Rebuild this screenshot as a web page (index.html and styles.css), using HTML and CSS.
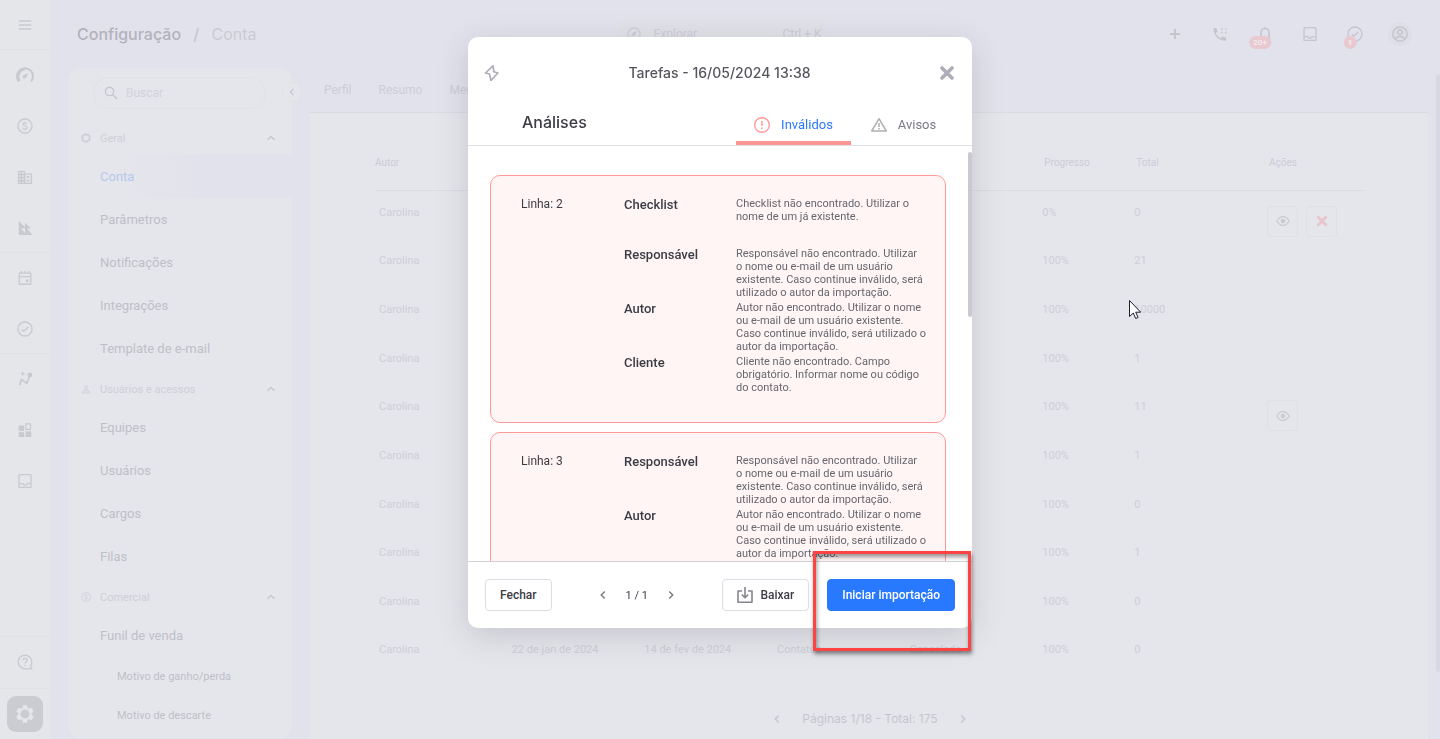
FILE: index.html
```html
<!DOCTYPE html>
<html lang="pt-BR">
<head>
  <meta charset="utf-8">
  <meta name="viewport" content="width=device-width, initial-scale=1">
  <title>Configuração / Conta</title>
  <link rel="stylesheet" href="styles.css">
</head>
<body>
  <!-- Shared icons -->
  <svg class="sprite" aria-hidden="true">
    <symbol id="i-up" viewBox="0 0 24 24"><path d="M7 14.5l5-5 5 5" fill="none" stroke="currentColor" stroke-width="2"/></symbol>
    <symbol id="i-left" viewBox="0 0 24 24"><path d="M15 6l-6 6 6 6" fill="none" stroke="currentColor" stroke-width="2.4"/></symbol>
    <symbol id="i-right" viewBox="0 0 24 24"><path d="M9 6l6 6-6 6" fill="none" stroke="currentColor" stroke-width="2.4"/></symbol>
    <symbol id="i-coin" viewBox="0 0 24 24"><circle cx="12" cy="12" r="10.5" fill="none" stroke="currentColor" stroke-width="2"/><path d="M15 9.2c-.3-1.3-1.4-2-3-2-1.7 0-3 .8-3 2.300 0 3.300 6.200 1.600 6.200 5 0 1.500-1.400 2.300-3.200 2.300s-3-.8-3.200-2.200M12 5.200v2M12 16.800v2" fill="none" stroke="currentColor" stroke-width="1.800"/></symbol>
    <symbol id="i-check" viewBox="0 0 24 24"><circle cx="12" cy="12" r="10.500" fill="none" stroke="currentColor" stroke-width="2"/><path d="M7 12.200l3.300 3.300 6.700-6.700" fill="none" stroke="currentColor" stroke-width="2"/></symbol>
    <symbol id="i-inbox" viewBox="0 0 24 24"><path d="M4 2.500h16l1 1V21.500H3V3.500zM3 16h5.500c.8 1.600 2 2.200 3.500 2.200s2.700-.6 3.500-2.200H21" fill="none" stroke="currentColor" stroke-width="2" stroke-linejoin="round"/></symbol>
    <symbol id="i-gear" viewBox="0 0 24 24"><path fill="currentColor" fill-rule="evenodd" d="M19.140 12.940c.04-.3.06-.61.06-.94 0-.32-.02-.64-.07-.94l2.030-1.580c.18-.14.23-.41.12-.61l-1.920-3.320c-.12-.22-.37-.29-.59-.22l-2.390.96c-.5-.38-1.030-.7-1.620-.94l-.36-2.540c-.04-.24-.24-.41-.48-.41h-3.840c-.24 0-.43.17-.47.41l-.36 2.540c-.59.24-1.130.57-1.620.94l-2.390-.96c-.22-.08-.47 0-.59.22L2.740 8.870c-.12.210-.08.470.12.610l2.030 1.580c-.05.3-.09.630-.09.940s.02.640.07.940l-2.030 1.580c-.18.140-.23.410-.12.610l1.920 3.320c.12.220.37.290.59.220l2.390-.960c.5.380 1.030.7 1.620.940l.36 2.540c.05.240.24.410.48.410h3.840c.24 0 .44-.17.47-.410l.36-2.540c.59-.24 1.130-.56 1.620-.940l2.390.960c.22.080.47 0 .59-.220l1.920-3.320c.12-.220.07-.470-.12-.610zM12 17a5 5 0 1 1 0-10 5 5 0 0 1 0 10z"/></symbol>
    <symbol id="i-eye" viewBox="0 0 24 24"><path d="M1.500 12C4 7 7.600 4.500 12 4.500S20 7 22.500 12C20 17 16.400 19.500 12 19.500S4 17 1.500 12z" fill="none" stroke="currentColor" stroke-width="2"/><circle cx="12" cy="12" r="3.800" fill="currentColor"/></symbol>
    <symbol id="i-close" viewBox="0 0 24 24"><path d="M4.500 4.500l15 15M19.500 4.500l-15 15" fill="none" stroke="currentColor" stroke-width="5.500" stroke-linecap="round"/></symbol>
  </svg>

  <div class="app">
    <nav class="rail" aria-label="Principal">
      <div class="rail-group">
        <button class="rail-item" aria-label="Menu"><svg class="icon-18" viewBox="0 0 18 18"><path d="M2 4.500h14M2 9h14M2 13.500h14" stroke="currentColor" stroke-width="1.600"/></svg></button>
      </div>
      <div class="rail-group">
        <a class="rail-item" href="#"><svg class="icon-20" viewBox="0 0 20 20"><path d="M4 16.500A8 8 0 1 1 16 16.500" fill="none" stroke="currentColor" stroke-width="2"/><path d="M4.500 16A7.500 7.500 0 0 1 10 4" fill="none" stroke="currentColor" stroke-width="3"/><path d="M13.500 8l-2.500 4.500a1.800 1.800 0 1 1-2-2.500z" fill="currentColor"/></svg></a>
        <a class="rail-item" href="#"><svg class="icon-16"><use href="#i-coin"/></svg></a>
        <a class="rail-item" href="#"><svg class="icon-18" viewBox="0 0 18 18"><path fill="currentColor" fill-rule="evenodd" d="M1 2h8v3h8v12H1zM2.500 3.500v2H4v-2zM6 3.500v2h1.500v-2zM2.500 7v2H4V7zM6 7v2h1.500V7zM2.500 10.500v2H4v-2zM6 10.500v2h1.500v-2zM2.500 14v1.500H4V14zM6 14v1.500h1.500V14zM9.500 6.500v9h6v-9zM11 8h3v2h-3zM11 12h3v2h-3z"/></svg></a>
        <a class="rail-item" href="#"><svg class="icon-18" viewBox="0 0 18 18"><path fill="currentColor" d="M2 1l7 7V3l7 6.500h-4.500L17.500 17H2z"/><path d="M9 9.500v5l-4.500-5z" fill="#e5e6ea"/></svg></a>
      </div>
      <div class="rail-group">
        <a class="rail-item" href="#"><svg class="icon-18" viewBox="0 0 18 18"><path d="M2.500 3.500h13v12.500h-13zM2.500 7.500h13M5 1v3M13 1v3M9 1v3" fill="none" stroke="currentColor" stroke-width="1.500" stroke-linejoin="round"/><circle cx="11.500" cy="12" r="1.700" fill="currentColor"/></svg></a>
        <a class="rail-item" href="#"><svg class="icon-16"><use href="#i-check"/></svg></a>
      </div>
      <div class="rail-group">
        <a class="rail-item" href="#"><svg class="icon-16" viewBox="0 0 18 18"><path d="M3 16l2-6.500 6 4.500 3-8" fill="none" stroke="currentColor" stroke-width="1.900" stroke-linejoin="round"/><circle cx="14.500" cy="4.500" r="2.700" fill="currentColor"/><path d="M6.500 0l.8 2.200 2.200.8-2.200.8-.8 2.200-.8-2.200L3.500 3l2.200-.8z" fill="currentColor"/></svg></a>
        <a class="rail-item" href="#"><svg class="icon-18" viewBox="0 0 18 18"><path d="M2 4h6v6H2zM2 11.500h6V17H2zM9.500 10.500H16V17H9.500z" fill="currentColor"/><path d="M10 2.200h5.200v6H10z" fill="none" stroke="currentColor" stroke-width="1.400"/></svg></a>
        <a class="rail-item" href="#"><svg class="icon-18"><use href="#i-inbox"/></svg></a>
      </div>
      <div class="rail-group rail-bottom">
        <a class="rail-item" href="#"><svg class="icon-18" viewBox="0 0 18 18"><path d="M16.700 16.700H9A7.700 7.700 0 1 1 16.700 9c0 2-.6 3.500-1.600 5z" fill="none" stroke="currentColor" stroke-width="1.500" stroke-linejoin="round"/><path d="M6.800 7c.2-1.400 1-2 2.200-2s2.300.8 2.300 2C11.300 8.700 9 8.900 9 10.700M9 12v1.500" fill="none" stroke="currentColor" stroke-width="1.500"/></svg></a>
      </div>
      <div class="rail-group">
        <a class="rail-item" href="#"><span class="rail-active"><svg class="icon-22"><use href="#i-gear"/></svg></span></a>
      </div>
    </nav>

    <div class="page">
      <header class="topbar">
        <h1 class="crumbs">Configuração <span class="slash">/</span> <span class="crumb">Conta</span></h1>
        <button class="explore">
          <svg class="icon-14" viewBox="0 0 24 24"><circle cx="12" cy="12" r="10.500" fill="none" stroke="currentColor" stroke-width="2"/><path d="M17 7l-3 7-7 3 3-7z" fill="currentColor"/></svg>
          <span>Explorar</span><span class="shortcut">Ctrl + K</span>
        </button>
        <div class="tools">
          <button class="tool" aria-label="Adicionar"><svg class="icon-14" viewBox="0 0 14 14"><path d="M7 2v10M2 7h10" stroke="currentColor" stroke-width="2"/></svg></button>
          <button class="tool" aria-label="Telefone"><svg class="icon-16" viewBox="0 0 16 16"><path d="M1.500 2h3l1 3.500-1.700 1.700c1 2.200 2.800 4 5 5l1.700-1.700 3.500 1v3.200C7 15.200 1 9 1.500 2z" fill="currentColor"/><path d="M9 3h1.500M13 3h1.500M9 6.500h1.500M13 6.500h1.500" stroke="currentColor" stroke-width="1.700"/></svg></button>
          <button class="tool" aria-label="Notificações"><svg class="icon-16" viewBox="0 0 16 16"><path d="M3 13h10.500M4 13V6.500a4 4 0 0 1 8 0V13M8 1v2" fill="none" stroke="currentColor" stroke-width="1.600"/></svg><span class="badge">20+</span></button>
          <button class="tool" aria-label="Caixa de entrada"><svg class="icon-16"><use href="#i-inbox"/></svg></button>
          <button class="tool" aria-label="Tarefas"><svg class="icon-16"><use href="#i-check"/></svg><span class="badge">1</span></button>
          <button class="tool" aria-label="Perfil"><span class="avatar"><svg class="icon-18" viewBox="0 0 18 18"><g fill="none" stroke="currentColor" stroke-width="1.700"><circle cx="9" cy="9" r="8"/><circle cx="9" cy="7" r="2.600"/><path d="M3.800 14c2.800-3 7.600-3 10.400 0"/></g></svg></span></button>
        </div>
      </header>

      <div class="columns">
        <aside class="sidebar">
          <button class="collapse" aria-label="Recolher"><svg class="icon-12"><use href="#i-left"/></svg></button>
          <label class="search">
            <svg class="icon-14" viewBox="0 0 14 14"><circle cx="5.500" cy="5.500" r="4.200" fill="none" stroke="currentColor" stroke-width="1.300"/><path d="M8.500 8.500l4.500 4.500" stroke="currentColor" stroke-width="1.600"/></svg>
            <input type="text" placeholder="Buscar" aria-label="Buscar">
          </label>
          <button class="section"><svg class="icon-10" viewBox="0 0 10 10"><path d="M5 1l3.500 2v4L5 9 1.500 7V3z" fill="none" stroke="currentColor" stroke-width="1.800"/></svg><span>Geral</span><svg class="icon-16"><use href="#i-up"/></svg></button>
          <a class="link active" href="#">Conta</a>
          <a class="link" href="#">Parâmetros</a>
          <a class="link" href="#">Notificações</a>
          <a class="link" href="#">Integrações</a>
          <a class="link" href="#">Template de e-mail</a>
          <button class="section"><svg class="icon-10" viewBox="0 0 10 10"><g fill="none" stroke="currentColor"><circle cx="5" cy="3.500" r="1.600"/><path d="M1.500 9V8c1-2 6-2 7 0v1z"/></g></svg><span>Usuários e acessos</span><svg class="icon-16"><use href="#i-up"/></svg></button>
          <a class="link" href="#">Equipes</a>
          <a class="link" href="#">Usuários</a>
          <a class="link" href="#">Cargos</a>
          <a class="link" href="#">Filas</a>
          <button class="section"><svg class="icon-10"><use href="#i-coin"/></svg><span>Comercial</span><svg class="icon-16"><use href="#i-up"/></svg></button>
          <a class="link" href="#">Funil de venda</a>
          <a class="link sub" href="#">Motivo de ganho/perda</a>
          <a class="link sub" href="#">Motivo de descarte</a>
        </aside>

        <main class="content">
          <nav class="tabs">
            <a href="#">Perfil</a>
            <a href="#">Resumo</a>
            <a href="#">Meu</a>
          </nav>
          <div class="panel">
            <table class="imports">
              <colgroup>
                <col class="wide"><col class="wide"><col class="wide"><col class="wide"><col class="wide">
                <col class="narrow"><col class="wide"><col>
              </colgroup>
              <thead>
                <tr><th>Autor</th><th></th><th></th><th></th><th></th><th>Progresso</th><th>Total</th><th>Ações</th></tr>
              </thead>
              <tbody>
                <tr><td>Carolina</td><td></td><td></td><td></td><td></td><td>0%</td><td>0</td>
                  <td><div class="actions">
                    <button class="action" aria-label="Ver"><svg class="icon-14"><use href="#i-eye"/></svg></button>
                    <button class="action cancel" aria-label="Cancelar"><svg class="icon-12"><use href="#i-close"/></svg></button>
                  </div></td></tr>
                <tr><td>Carolina</td><td></td><td></td><td></td><td></td><td>100%</td><td>21</td><td></td></tr>
                <tr><td>Carolina</td><td></td><td></td><td></td><td></td><td>100%</td><td>10000</td><td></td></tr>
                <tr><td>Carolina</td><td></td><td></td><td></td><td></td><td>100%</td><td>1</td><td></td></tr>
                <tr><td>Carolina</td><td></td><td></td><td></td><td></td><td>100%</td><td>11</td>
                  <td><div class="actions">
                    <button class="action" aria-label="Ver"><svg class="icon-14"><use href="#i-eye"/></svg></button>
                  </div></td></tr>
                <tr><td>Carolina</td><td></td><td></td><td></td><td></td><td>100%</td><td>1</td><td></td></tr>
                <tr><td>Carolina</td><td></td><td></td><td></td><td></td><td>100%</td><td>0</td><td></td></tr>
                <tr><td>Carolina</td><td></td><td></td><td></td><td></td><td>100%</td><td>1</td><td></td></tr>
                <tr><td>Carolina</td><td></td><td></td><td></td><td></td><td>100%</td><td>0</td><td></td></tr>
                <tr><td>Carolina</td><td>22 de jan de 2024</td><td>14 de fev de 2024</td><td>Contatos</td><td>Cancelada</td><td>100%</td><td>0</td><td></td></tr>
              </tbody>
            </table>
            <div class="pagination">
              <button aria-label="Página anterior"><svg class="icon-14"><use href="#i-left"/></svg></button>
              <span>Páginas 1/18 - Total: 175</span>
              <button aria-label="Próxima página"><svg class="icon-14"><use href="#i-right"/></svg></button>
            </div>
          </div>
        </main>
      </div>
    </div>
    <div class="page-scroll"></div>
  </div>

  <div class="overlay">
    <section class="modal" role="dialog" aria-labelledby="modal-title">
      <header class="modal-header">
        <svg class="icon-16" viewBox="0 0 16 16"><path d="M9 .800L1.500 8l4 1L7 15.500 13.800 8l-4-1.200z" fill="none" stroke="currentColor" stroke-width="1.700" stroke-linejoin="round"/></svg>
        <h2 id="modal-title">Tarefas - 16/05/2024 13:38</h2>
        <button class="modal-close" aria-label="Fechar"><svg class="icon-16"><use href="#i-close"/></svg></button>
      </header>
      <div class="modal-tabs">
        <h3>Análises</h3>
        <button class="modal-tab selected"><svg class="icon-16" viewBox="0 0 16 16"><circle cx="8" cy="8" r="7.300" fill="none" stroke="#ff9a9a" stroke-width="1.400"/><path d="M8 4v5M8 10.500V12" stroke="#ff9a9a" stroke-width="1.500"/></svg>Inválidos</button>
        <button class="modal-tab"><svg class="icon-16" viewBox="0 0 16 16"><path d="M8 1.700L15.300 14H.7z" fill="none" stroke="#b0b0b4" stroke-width="1.500" stroke-linejoin="round"/><path d="M8 6v4M8 11v1.500" stroke="#b0b0b4" stroke-width="1.500"/></svg>Avisos</button>
      </div>
      <div class="modal-body">
        <article class="card">
          <div class="line">Linha: 2</div>
          <dl class="errors">
            <div class="error"><dt>Checklist</dt><dd>Checklist não encontrado. Utilizar o nome de um já existente.</dd></div>
            <div class="error"><dt>Responsável</dt><dd>Responsável não encontrado. Utilizar<br>o nome ou e-mail de um usuário existente. Caso continue inválido, será utilizado o autor da importação.</dd></div>
            <div class="error"><dt>Autor</dt><dd>Autor não encontrado. Utilizar o nome ou e-mail de um usuário existente.<br>Caso continue inválido, será utilizado o autor da importação.</dd></div>
            <div class="error"><dt>Cliente</dt><dd>Cliente não encontrado. Campo obrigatório. Informar nome ou código do contato.</dd></div>
          </dl>
        </article>
        <article class="card">
          <div class="line">Linha: 3</div>
          <dl class="errors">
            <div class="error"><dt>Responsável</dt><dd>Responsável não encontrado. Utilizar<br>o nome ou e-mail de um usuário existente. Caso continue inválido, será utilizado o autor da importação.</dd></div>
            <div class="error"><dt>Autor</dt><dd>Autor não encontrado. Utilizar o nome ou e-mail de um usuário existente.<br>Caso continue inválido, será utilizado o autor da importação.</dd></div>
          </dl>
        </article>
        <div class="modal-scroll"></div>
      </div>
      <footer class="modal-footer">
        <button class="btn">Fechar</button>
        <div class="pager">
          <button aria-label="Anterior"><svg class="icon-14"><use href="#i-left"/></svg></button>
          <span>1 / 1</span>
          <button aria-label="Próximo"><svg class="icon-14"><use href="#i-right"/></svg></button>
        </div>
        <button class="btn download"><svg class="icon-16" viewBox="0 0 16 16"><path d="M5 4H1v11.200h14V4h-4M8 0v10.500M4.800 7.500L8 10.700l3.200-3.200" fill="none" stroke="#85858c" stroke-width="1.600" stroke-linejoin="round"/></svg>Baixar</button>
        <button class="btn primary">Iniciar importação</button>
        <div class="highlight"></div>
      </footer>
    </section>
  </div>

  <svg class="cursor" viewBox="0 0 12 20" aria-hidden="true"><path d="M.5.500v16l3.800-3.500 2.400 5.500 2.400-1-2.400-5.300h5z" fill="#fff" stroke="#1c1c2c" stroke-width="1"/></svg>
</body>
</html>
```
FILE: styles.css
```css
* {
  box-sizing: border-box;
}
body {
  margin: 0;
  font-family: Roboto, "Liberation Sans", sans-serif;
  font-size: 12px;
  color: #c5c5ce;
  background: #e2e2ec;
}
a {
  color: inherit;
  text-decoration: none;
}
button {
  font: inherit;
  color: inherit;
  background: none;
  border: 0;
  padding: 0;
}
h1, h2, h3, dl, dd {
  margin: 0;
}
h1, h2, h3, .pagination {
  font-family: Inter, "Liberation Sans", sans-serif;
}
svg {
  display: block;
  flex: none;
}
.sprite { position: absolute; width: 0; height: 0; }
.icon-10 { width: 10px; height: 10px; }
.icon-12 { width: 12px; height: 12px; }
.icon-14 { width: 14px; height: 14px; }
.icon-16 { width: 16px; height: 16px; }
.icon-18 { width: 16px; height: 16px; }
.icon-20 { width: 20px; height: 20px; }
.icon-22 { width: 22px; height: 22px; }

.app {
  display: flex;
  height: 100vh;
  overflow: hidden;
}

/* Icon rail */
.rail {
  flex: none;
  width: 50px;
  display: flex;
  flex-direction: column;
  background: #e5e6ea;
  color: #c9cad0;
}
.rail-group {
  display: flex;
  flex-direction: column;
  gap: 1px;
}
.rail-group + .rail-group {
  margin-top: -1px;
  border-top: 1px solid #e1e2e7;
}
.rail-item {
  height: 50px;
  display: flex;
  align-items: center;
  justify-content: center;
}
.rail-group + .rail-bottom {
  margin-top: auto;
  padding-bottom: 2px;
}
.rail-active {
  width: 36px;
  height: 36px;
  display: flex;
  align-items: center;
  justify-content: center;
  border-radius: 9px;
  background: #cbccd1;
  color: #e5e6ea;
}

/* Top bar */
.page {
  flex: 1;
  min-width: 0;
  display: flex;
  flex-direction: column;
}
.topbar {
  flex: none;
  height: 68px;
  padding: 0 18px 0 27px;
  display: grid;
  grid-template-columns: 10fr 210px 11fr;
  align-items: center;
}
.crumbs {
  font-size: 16px;
  font-weight: 500;
  color: #b2b2bc;
}
.slash {
  margin: 0 8px;
  color: #c5c5cf;
}
.crumb {
  font-weight: 400;
  color: #cacad4;
}
.explore {
  height: 34px;
  padding: 0 6px 0 10px;
  display: flex;
  align-items: center;
  gap: 12px;
  border-radius: 17px;
  background: #e1e1e8;
  color: #cdcdd6;
}
.shortcut {
  margin-left: auto;
}
.tools {
  display: flex;
  justify-content: flex-end;
  color: #c5c5ce;
}
.tool {
  position: relative;
  width: 45px;
  height: 40px;
  display: flex;
  align-items: center;
  justify-content: center;
}
.badge {
  position: absolute;
  left: 18px;
  top: 22px;
  transform: translateX(-50%);
  padding: 0 4px;
  border-radius: 7px;
  background: #e8c9d0;
  color: #f2e9ee;
  font-size: 8px;
  line-height: 13px;
  font-weight: 700;
}
.avatar {
  padding: 4px;
  border-radius: 50%;
  background: #dedee8;
}

/* Settings menu */
.columns {
  flex: 1;
  min-height: 0;
  display: flex;
  gap: 18px;
  padding: 0 12px 0 18px;
}
.sidebar {
  position: relative;
  flex: none;
  width: 224px;
  align-self: flex-start;
  padding: 9px 0 3px;
  border-radius: 12px;
  background: #e5e6eb;
}
.collapse {
  position: absolute;
  right: -10px;
  top: 14px;
  width: 20px;
  height: 20px;
  display: flex;
  align-items: center;
  justify-content: center;
  border: 1px solid #e1e1e8;
  border-radius: 50%;
  background: #e5e6eb;
}
.search {
  height: 32px;
  margin: 0 26px 12px 25px;
  padding: 0 10px;
  display: flex;
  align-items: center;
  gap: 8px;
  border: 1px solid #e1e2e7;
  border-radius: 16px;
}
.search input {
  flex: 1;
  min-width: 0;
  padding: 0;
  border: 0;
  background: none;
  font: inherit;
}
.search input::placeholder {
  color: #d2d2dd;
}
.section {
  width: 100%;
  height: 34px;
  margin-top: 2px;
  padding: 0 13px;
  display: flex;
  align-items: center;
  gap: 9px;
  font-size: 11px;
  color: #cecfd7;
}
.section span {
  flex: 1;
  text-align: left;
}
.section svg:last-child {
  color: #c3c4cb;
}
.link {
  display: block;
  padding-left: 32px;
  font-size: 13px;
  line-height: 43px;
  color: #bfbfc8;
}
.active {
  color: #b8c8ee;
  background: linear-gradient(90deg, #e5e6eb 20%, #e2e2ec 60%);
}
.sub {
  padding-left: 49px;
  font-size: 11px;
  line-height: 39px;
}

/* Imports table */
.content {
  flex: 1;
  min-width: 0;
  display: flex;
  flex-direction: column;
}
.tabs {
  height: 45px;
  padding-left: 14px;
  display: flex;
  align-items: center;
  gap: 27px;
  border-bottom: 1px solid #dadbe1;
}
.tabs a {
  color: #cdcdd7;
}
.panel {
  flex: 1;
  padding: 22px 63px 0 65px;
  background: #e5e6eb;
}
.imports {
  width: 100%;
  height: 542px;
  table-layout: fixed;
  border-collapse: collapse;
  font-size: 11px;
}
.wide { width: 13.4%; }
.narrow { width: 9.3%; }
.imports th {
  height: 55px;
  padding: 1px 6px 0;
  border-bottom: 1px solid #dcdde3;
  font-size: 10px;
  font-weight: 400;
  text-align: left;
  color: #cbccd8;
}
.imports th:first-child {
  padding-left: 0;
}
.imports td {
  padding: 15px 4px 0;
  line-height: 14px;
  vertical-align: top;
  color: #cdced8;
}
.actions {
  display: flex;
  gap: 8px;
  height: 14px;
}
.action {
  flex: none;
  width: 31px;
  height: 31px;
  display: flex;
  align-items: center;
  justify-content: center;
  border: 1px solid #dfe0e6;
  border-radius: 4px;
  color: #c9cad0;
}
.cancel {
  color: #e8c4cc;
}
.pagination {
  display: flex;
  justify-content: center;
  align-items: center;
  gap: 18px;
  margin-top: 34px;
}
.page-scroll {
  position: absolute;
  right: 0;
  top: 10%;
  width: 4px;
  height: 81%;
  border-radius: 2px;
  background: #d8d8e2;
}

/* Analysis dialog */
.overlay {
  position: fixed;
  inset: 0;
  display: flex;
  align-items: flex-start;
  justify-content: center;
}
.modal {
  width: 504px;
  height: 80vh;
  margin-top: 5vh;
  display: flex;
  flex-direction: column;
  border-radius: 10px;
  background: #fff;
  box-shadow: 0 8px 32px rgba(60, 60, 80, .18);
  color: #3c3c46;
}
.modal-header {
  flex: none;
  height: 72px;
  padding: 0 17px 0 16px;
  display: flex;
  align-items: center;
  justify-content: space-between;
  color: #aeaeb9;
}
.modal-header h2 {
  font-size: 14px;
  font-weight: 500;
  color: #55555f;
}
.modal-tabs {
  flex: none;
  height: 37px;
  padding-left: 54px;
  display: flex;
  border-bottom: 1px solid #e0e0e4;
}
.modal-tabs h3 {
  margin-right: auto;
  font-size: 16px;
  line-height: 27px;
  font-weight: 500;
}
.modal-tab {
  width: 115px;
  border-bottom: 4px solid transparent;
  display: flex;
  align-items: center;
  justify-content: center;
  gap: 11px;
  font-size: 13px;
  color: #7b7b86;
}
.modal-tab:last-child {
  width: 105px;
  margin-right: 16px;
}
.selected {
  border-color: #ff9696;
  border-radius: 2px 2px 0 0;
  color: #2a78ff;
}
.modal-body {
  position: relative;
  flex: 1;
  min-height: 0;
  padding: 29px 26px 0 22px;
  overflow: hidden;
}
.card {
  display: flex;
  margin-bottom: 9px;
  padding: 20px 18px 18px 30px;
  border: 1px solid #ff9a9a;
  border-radius: 10px;
  background: #fff5f4;
}
.line {
  width: 103px;
  font-size: 12px;
  line-height: 16px;
}
.errors {
  flex: 1;
}
.error {
  display: flex;
  min-height: 50px;
  padding-bottom: 1px;
}
.error dt {
  flex: none;
  width: 112px;
  font-size: 13px;
  line-height: 17px;
  font-weight: 500;
}
.error dd {
  padding-top: 1px;
  font-size: 11px;
  line-height: 13px;
  color: #66666f;
}
.modal-scroll {
  position: absolute;
  right: 0;
  top: 6px;
  width: 4px;
  height: 165px;
  border-radius: 2px;
  background: #c9c9d2;
}
.modal-footer {
  position: relative;
  flex: none;
  height: 67px;
  padding: 0 17px;
  display: flex;
  align-items: center;
  border-top: 1px solid #d0d0d8;
}
.btn {
  height: 32px;
  padding: 0 14px;
  border: 1px solid #dcdce4;
  border-radius: 4px;
  font-weight: 500;
  background: #fff;
}
.pager {
  display: flex;
  align-items: center;
  gap: 16px;
  margin: 0 auto 0 44px;
  font-size: 11px;
}
.pager svg {
  color: #77777f;
}
.download {
  display: flex;
  align-items: center;
  gap: 7px;
  margin-right: 18px;
}
.primary {
  border-color: #2979ff;
  background: #2979ff;
  color: #fff;
}
.highlight {
  position: absolute;
  top: -11px;
  right: 1px;
  bottom: -23px;
  width: 158px;
  border: 3px solid #fc4444;
  box-shadow: 1px 3px 4px rgba(0, 0, 0, .45), inset 1px 3px 4px rgba(0, 0, 0, .4);
  pointer-events: none;
}

.cursor {
  position: absolute;
  left: 1129px;
  top: 300px;
  width: 12px;
  height: 20px;
}
```
